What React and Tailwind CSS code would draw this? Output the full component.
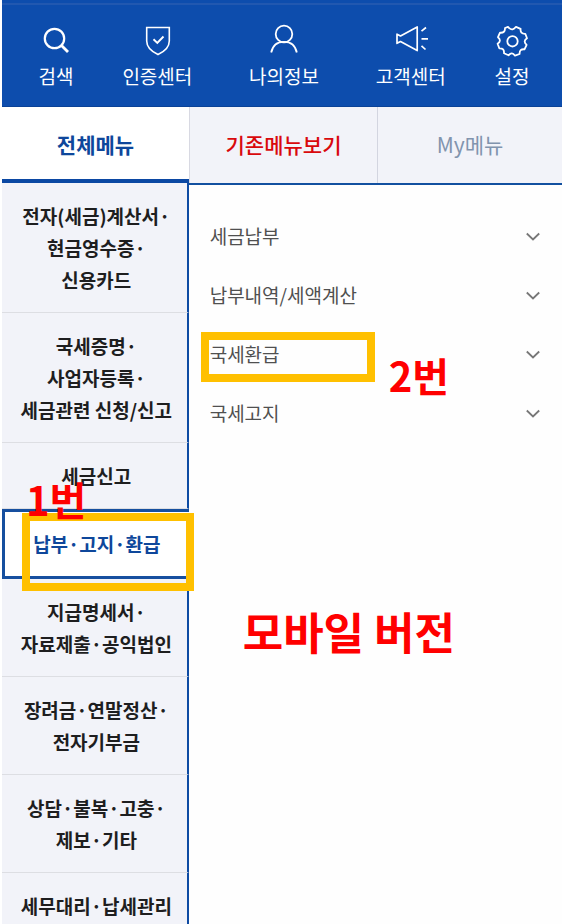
import React, { useState } from "react";

const shortcuts = [
  { label: "검색", icon: SearchIcon, width: "flex-[3]" },
  { label: "인증센터", icon: ShieldIcon, width: "flex-[5]" },
  { label: "나의정보", icon: UserIcon, width: "flex-[5]" },
  { label: "고객센터", icon: SpeakerIcon, width: "flex-[5]" },
  { label: "설정", icon: GearIcon, width: "flex-[3]" },
];

const categories = [
  ["전자(세금)계산서·", "현금영수증·", "신용카드"],
  ["국세증명·", "사업자등록·", "세금관련 신청/신고"],
  ["세금신고"],
  ["납부·고지·환급"],
  ["지급명세서·", "자료제출·공익법인"],
  ["장려금·연말정산·", "전자기부금"],
  ["상담·불복·고충·", "제보·기타"],
  ["세무대리·납세관리"],
];

const subMenus = ["세금납부", "납부내역/세액계산", "국세환급", "국세고지"];

function SearchIcon() {
  return (
    <svg width="34" height="34" viewBox="0 0 34 34" fill="none" stroke="currentColor" strokeWidth="2.2">
      <circle cx="15.5" cy="15.5" r="9.7" />
      <path d="M22.5 22.5 L29 29" strokeWidth="2.8" />
    </svg>
  );
}

function ShieldIcon() {
  return (
    <svg width="34" height="34" viewBox="0 0 34 34" fill="none" stroke="currentColor" strokeWidth="1.6">
      <path d="M6.7 4.5 H29.3 V18 C29.3 25 24.5 28.5 18 31.5 C11.5 28.5 6.7 25 6.7 18 Z" />
      <path d="M13.5 16.3 L17.3 20 L23.5 13.5" strokeWidth="1.9" />
    </svg>
  );
}

function UserIcon() {
  return (
    <svg width="34" height="34" viewBox="0 0 34 34" fill="none" stroke="currentColor" strokeWidth="1.8">
      <circle cx="17" cy="11" r="8.3" />
      <path d="M4.2 29.5 C5.5 23 10 18.8 17 18.8 C24 18.8 28.5 23 29.8 29.5" />
    </svg>
  );
}

function SpeakerIcon() {
  return (
    <svg width="34" height="34" viewBox="0 0 34 34" fill="none" stroke="currentColor" strokeWidth="1.7" strokeLinejoin="round">
      <path d="M3 11.2 L6.5 13 L23.2 4 V27.6 L6.5 18.5 L3 20.3 Z" />
      <path d="M27.5 8.2 L32 4.5 M27.5 15.8 H34 M27.5 22.8 L31.5 26.5" />
    </svg>
  );
}

function GearIcon() {
  return (
    <svg width="34" height="34" viewBox="0 0 34 34" fill="none" stroke="currentColor" strokeWidth="1.8" strokeLinejoin="round">
      <path d="M14.2 5.2 Q17.6 8.2 21 3.8 L25.6 5.8 Q25 11 30.3 10.8 L32 15.3 Q27.6 18.2 31.6 21.8 L29.5 26.3 Q24.3 25.8 24.6 31 L20 32.7 Q17 28.4 13.5 32.3 L9 30.3 Q9.5 25 4.3 25.3 L2.6 20.7 Q7 17.7 3 14.2 L5 9.7 Q10.3 10.2 10 5 L13 3.8 Z" />
      <circle cx="17.5" cy="18.3" r="5.2" />
    </svg>
  );
}

function Chevron({ open }) {
  return (
    <svg
      className={open ? "rotate-180" : ""}
      width="14"
      height="10"
      viewBox="0 0 14 10"
      fill="none"
      stroke="#777777"
      strokeWidth="1.8"
    >
      <path d="M0.8 1.5 L7 7.5 L13.2 1.5" />
    </svg>
  );
}

function App() {
  const [tab, setTab] = useState(0);
  const [category, setCategory] = useState(3);
  const [openMenu, setOpenMenu] = useState(null);

  return (
    <div className="flex h-screen flex-col overflow-hidden bg-white pl-[2px] font-['Noto_Sans_CJK_KR',sans-serif]">
      <header className="shrink-0 border-b border-[#0a4297] bg-[#0d4dad] pt-[3px] text-white">
        <div className="flex border-t-2 border-[#2158b0] pt-[18px] pr-3 pb-4 pl-4">
          {shortcuts.map(({ label, icon: Icon, width }) => (
            <button key={label} className={`flex flex-col items-center gap-1 ${width}`}>
              <Icon />
              <span className="text-[19px] leading-[29px] whitespace-nowrap">{label}</span>
            </button>
          ))}
        </div>
      </header>

      <nav className="grid h-[76px] shrink-0 grid-cols-[187fr_188fr_185fr] text-[21px]">
        <button
          onClick={() => setTab(0)}
          className="border-b-4 border-[#0b48a3] bg-white pt-1 font-bold text-[#0e479b]"
        >
          전체메뉴
        </button>
        <button
          onClick={() => setTab(1)}
          className="border-l border-[#d8d9e2] bg-[#f2f3f9] font-medium text-[#d9090d]"
        >
          기존메뉴보기
        </button>
        <button
          onClick={() => setTab(2)}
          className="border-l border-[#d3d5e0] bg-[#f2f3f9] text-[#8194ae]"
        >
          My메뉴
        </button>
      </nav>

      <div className="flex min-h-0 flex-1">
        <aside className="w-1/3 shrink-0">
          {categories.map((lines, idx) => (
            <div key={lines[0]} className="relative">
              <button
                onClick={() => setCategory(idx)}
                className={
                  idx === category
                    ? "block w-full border-y-[3px] border-l-[3px] border-[#164f9f] bg-white py-4 text-[19px] leading-8 font-bold text-[#0e479b]"
                    : "block w-full border-r-2 border-b border-r-[#0e4ba3] border-b-[#dddee3] bg-[#f2f3f9] pt-[17px] pb-4 pl-1 text-[19px] leading-8 font-bold text-[#1e1e1f]"
                }
              >
                {lines.map((line) => (
                  <span key={line} className="block whitespace-nowrap">
                    {line}
                  </span>
                ))}
              </button>
              {idx === 3 && (
                <>
                  <div className="pointer-events-none absolute top-1 -right-[5px] -bottom-3 left-5 z-10 border-8 border-[#ffc000]" />
                  <strong className="pointer-events-none absolute -top-8 left-6 z-20 text-[40px] leading-[44px] font-bold text-[#ff0000]">
                    1번
                  </strong>
                </>
              )}
            </div>
          ))}
        </aside>

        <main className="flex-1 border-t-2 border-[#1250a0] bg-[#fefefe]">
          <ul className="pt-[22px]">
            {subMenus.map((name, idx) => (
              <li key={name} className="relative">
                <button
                  onClick={() => setOpenMenu(openMenu === idx ? null : idx)}
                  className="flex h-[59px] w-full items-center justify-between pr-[22px] pl-[21px] text-[19px] text-[#505050]"
                >
                  {name}
                  <Chevron open={openMenu === idx} />
                </button>
                {idx === 2 && (
                  <>
                    <div className="pointer-events-none absolute top-[7px] left-3 h-[50px] w-[174px] border-8 border-[#ffc000]" />
                    <strong className="pointer-events-none absolute top-[26px] left-[200px] text-[40px] leading-[48px] font-bold text-[#ff0000]">
                      2번
                    </strong>
                  </>
                )}
              </li>
            ))}
          </ul>
          <p className="mt-[160px] pl-[54px] text-[44px] leading-[56px] font-bold text-[#ff0000]">
            모바일 버전
          </p>
        </main>
      </div>
    </div>
  );
}

export default App;
